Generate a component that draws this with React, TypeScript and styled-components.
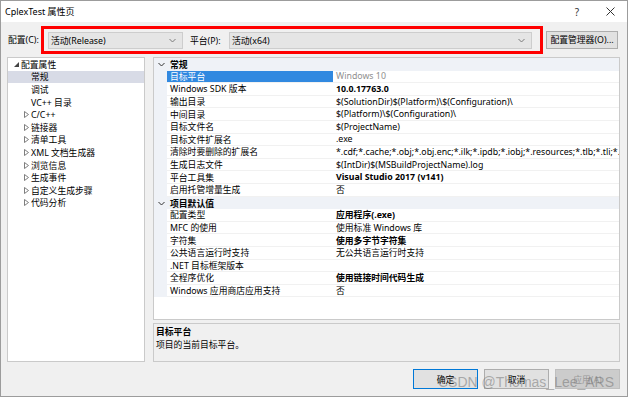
import React from 'react';
import styled, { createGlobalStyle } from 'styled-components';

const Global = createGlobalStyle`
  html, body { margin: 0; padding: 0; background: #ffffff; }
  body { font-family: "Noto Sans", "Noto Sans CJK SC", sans-serif; }
  * { box-sizing: border-box; }
`;

const FONT = `"Noto Sans", "Noto Sans CJK SC", sans-serif`;

const Window = styled.div`
  position: relative;
  width: 628px;
  height: 397px;
  border: 1px solid #9c9c9c;
  background: #f0f0f0;
  display: flex;
  flex-direction: column;
  font-family: ${FONT};
  font-size: 8.8px;
  color: #000;
  overflow: hidden;
`;

const TitleBar = styled.div`
  height: 21px;
  background: #ffffff;
  display: flex;
  align-items: center;
  padding-left: 4px;
`;

const TitleText = styled.div`
  flex: 1;
  font-size: 9px;
  color: #000;
`;

const TitleButton = styled.div<{ $w: number }>`
  width: ${(p) => p.$w}px;
  height: 21px;
  display: flex;
  align-items: center;
  justify-content: center;
  color: #333;
  font-size: 10px;
`;

const Toolbar = styled.div`
  height: 35px;
  display: flex;
  align-items: center;
  padding-left: 7px;
`;

const Label = styled.div<{ $w: number }>`
  width: ${(p) => p.$w}px;
  white-space: nowrap;
`;

const RedFrame = styled.div`
  height: 28px;
  border: 3px solid #ff0000;
  display: flex;
  align-items: center;
  padding: 0 8px 0 4px;
  margin-top: 1px;
`;

const Combo = styled.div<{ $w: number }>`
  width: ${(p) => p.$w}px;
  height: 17px;
  background: #e5e5e5;
  border: 1px solid #cdcdcd;
  display: flex;
  align-items: center;
  padding: 0 6px 0 2px;
  margin-right: 7px;
  &:last-child { margin-right: 0; }
`;

const ComboText = styled.div`
  flex: 1;
`;

const Button = styled.div<{ $w: number; $h: number; $focus?: boolean; $disabled?: boolean }>`
  width: ${(p) => p.$w}px;
  height: ${(p) => p.$h}px;
  background: ${(p) => (p.$disabled ? '#cccccc' : '#e1e1e1')};
  border: 1px solid ${(p) => (p.$focus ? '#0078d7' : p.$disabled ? '#bfbfbf' : '#adadad')};
  display: flex;
  align-items: center;
  justify-content: center;
  color: ${(p) => (p.$disabled ? '#9a9a9a' : '#000')};
  white-space: nowrap;
`;

const Main = styled.div`
  height: 305px;
  display: flex;
  gap: 8px;
  padding: 0 7px 0 6px;
`;

const TreePanel = styled.div`
  width: 138px;
  height: 100%;
  background: #ffffff;
  border: 1px solid #cacaca;
  padding-top: 0px;
`;

const TreeRow = styled.div<{ $level: number; $selected?: boolean }>`
  height: 12.6px;
  display: flex;
  align-items: center;
  padding-left: ${(p) => 6 + p.$level * 10}px;
  background: ${(p) => (p.$selected ? '#d8dbe6' : 'transparent')};
  white-space: nowrap;
`;

const Arrow = styled.div`
  width: 7px;
  height: 12px;
  display: flex;
  align-items: center;
`;

const RightCol = styled.div`
  flex: 1;
  display: flex;
  flex-direction: column;
  gap: 3px;
`;

const Grid = styled.div`
  height: 263px;
  background: #ffffff;
  border: 1px solid #cacaca;
`;

const GridRow = styled.div<{ $header?: boolean }>`
  height: 12.6px;
  display: grid;
  grid-template-columns: 13px 166px 1fr;
  background: ${(p) => (p.$header ? '#eff2f7' : 'transparent')};
  white-space: nowrap;
`;

const Gutter = styled.div`
  background: #eff2f7;
  display: flex;
  align-items: center;
  justify-content: center;
  padding-left: 1px;
`;

const Cell = styled.div<{ $selected?: boolean; $bold?: boolean; $muted?: boolean }>`
  display: flex;
  align-items: center;
  padding-left: 3px;
  overflow: hidden;
  border-bottom: 1px solid #f1f1f1;
  background: ${(p) => (p.$selected ? '#3189e0' : 'transparent')};
  color: ${(p) => (p.$selected ? '#ffffff' : p.$muted ? '#8f8f8f' : '#000')};
  font-weight: ${(p) => (p.$bold ? 700 : 400)};
`;

const HeaderCell = styled.div`
  grid-column: 2 / 4;
  display: flex;
  align-items: center;
  padding-left: 3px;
  font-weight: 700;
`;

const Description = styled.div`
  height: 39px;
  border: 1px solid #cacaca;
  background: #f0f0f0;
  padding: 2px 2px;
  line-height: 12.6px;
`;

const DescTitle = styled.div`
  font-weight: 700;
`;

const Footer = styled.div`
  flex: 1;
  display: flex;
  justify-content: flex-end;
  align-items: flex-start;
  gap: 6px;
  padding: 7px 7px 0 0;
`;

const Watermark = styled.div`
  position: absolute;
  left: 437px;
  top: 372px;
  font-family: "Liberation Sans", Arial, sans-serif;
  font-size: 14px;
  line-height: 18px;
  color: rgba(110, 110, 110, 0.5);
  white-space: nowrap;
  pointer-events: none;
`;

const ChevronDown = ({ color = '#606060' }: { color?: string }) => (
  <svg width="7" height="5" viewBox="0 0 7 5">
    <polyline points="0.5,1 3.5,4 6.5,1" fill="none" stroke={color} strokeWidth="1" />
  </svg>
);

const Expanded = () => (
  <svg width="5" height="5" viewBox="0 0 5 5">
    <polygon points="5,0 5,5 0,5" fill="#444" />
  </svg>
);

const Collapsed = () => (
  <svg width="5" height="7" viewBox="0 0 5 7">
    <polygon points="0.5,0.5 4.5,3.5 0.5,6.5" fill="none" stroke="#707070" strokeWidth="0.9" />
  </svg>
);

const CloseIcon = () => (
  <svg width="9" height="9" viewBox="0 0 9 9">
    <path d="M0.5 0.5 L8.5 8.5 M8.5 0.5 L0.5 8.5" stroke="#333" strokeWidth="1" />
  </svg>
);

type TreeItem = { label: string; level: number; arrow?: 'open' | 'closed'; selected?: boolean };

const tree: TreeItem[] = [
  { label: '配置属性', level: 0, arrow: 'open' },
  { label: '常规', level: 1, selected: true },
  { label: '调试', level: 1 },
  { label: 'VC++ 目录', level: 1 },
  { label: 'C/C++', level: 1, arrow: 'closed' },
  { label: '链接器', level: 1, arrow: 'closed' },
  { label: '清单工具', level: 1, arrow: 'closed' },
  { label: 'XML 文档生成器', level: 1, arrow: 'closed' },
  { label: '浏览信息', level: 1, arrow: 'closed' },
  { label: '生成事件', level: 1, arrow: 'closed' },
  { label: '自定义生成步骤', level: 1, arrow: 'closed' },
  { label: '代码分析', level: 1, arrow: 'closed' },
];

type Prop = { name: string; value: string; bold?: boolean; muted?: boolean; selected?: boolean };
type Section = { title: string; props: Prop[] };

const sections: Section[] = [
  {
    title: '常规',
    props: [
      { name: '目标平台', value: 'Windows 10', muted: true, selected: true },
      { name: 'Windows SDK 版本', value: '10.0.17763.0', bold: true },
      { name: '输出目录', value: '$(SolutionDir)$(Platform)\\$(Configuration)\\' },
      { name: '中间目录', value: '$(Platform)\\$(Configuration)\\' },
      { name: '目标文件名', value: '$(ProjectName)' },
      { name: '目标文件扩展名', value: '.exe' },
      {
        name: '清除时要删除的扩展名',
        value: '*.cdf;*.cache;*.obj;*.obj.enc;*.ilk;*.ipdb;*.iobj;*.resources;*.tlb;*.tli;*.tlh;*.tmp;*.rsp',
      },
      { name: '生成日志文件', value: '$(IntDir)$(MSBuildProjectName).log' },
      { name: '平台工具集', value: 'Visual Studio 2017 (v141)', bold: true },
      { name: '启用托管增量生成', value: '否' },
    ],
  },
  {
    title: '项目默认值',
    props: [
      { name: '配置类型', value: '应用程序(.exe)', bold: true },
      { name: 'MFC 的使用', value: '使用标准 Windows 库' },
      { name: '字符集', value: '使用多字节字符集', bold: true },
      { name: '公共语言运行时支持', value: '无公共语言运行时支持' },
      { name: '.NET 目标框架版本', value: '' },
      { name: '全程序优化', value: '使用链接时间代码生成', bold: true },
      { name: 'Windows 应用商店应用支持', value: '否' },
    ],
  },
];

export default function App() {
  return (
    <>
      <Global />
      <Window>
        <TitleBar>
          <TitleText>CplexTest 属性页</TitleText>
          <TitleButton $w={32}>?</TitleButton>
          <TitleButton $w={34}>
            <CloseIcon />
          </TitleButton>
        </TitleBar>

        <Toolbar>
          <Label $w={33}>配置(C):</Label>
          <RedFrame>
            <Combo $w={135}>
              <ComboText>活动(Release)</ComboText>
              <ChevronDown color="#7a7a7a" />
            </Combo>
            <Label $w={39}>平台(P):</Label>
            <Combo $w={303}>
              <ComboText>活动(x64)</ComboText>
              <ChevronDown color="#7a7a7a" />
            </Combo>
          </RedFrame>
          <div style={{ width: 3 }} />
          <Button $w={72} $h={18}>
            配置管理器(O)...
          </Button>
        </Toolbar>

        <Main>
          <TreePanel>
            {tree.map((t) => (
              <TreeRow key={t.label} $level={t.level} $selected={t.selected}>
                <Arrow>{t.arrow === 'open' ? <Expanded /> : t.arrow === 'closed' ? <Collapsed /> : null}</Arrow>
                {t.label}
              </TreeRow>
            ))}
          </TreePanel>

          <RightCol>
            <Grid>
              {sections.map((s) => (
                <React.Fragment key={s.title}>
                  <GridRow $header>
                    <Gutter>
                      <ChevronDown color="#333" />
                    </Gutter>
                    <HeaderCell>{s.title}</HeaderCell>
                  </GridRow>
                  {s.props.map((p) => (
                    <GridRow key={p.name}>
                      <Gutter />
                      <Cell $selected={p.selected}>{p.name}</Cell>
                      <Cell $bold={p.bold} $muted={p.muted}>
                        {p.value}
                      </Cell>
                    </GridRow>
                  ))}
                </React.Fragment>
              ))}
            </Grid>
            <Description>
              <DescTitle>目标平台</DescTitle>
              <div>项目的当前目标平台。</div>
            </Description>
          </RightCol>
        </Main>

        <Footer>
          <Button $w={65} $h={20} $focus>
            确定
          </Button>
          <Button $w={65} $h={20}>
            取消
          </Button>
          <Button $w={65} $h={20} $disabled>
            应用(A)
          </Button>
        </Footer>

        <Watermark>CSDN @Thomas_Lee_ARS</Watermark>
      </Window>
    </>
  );
}
